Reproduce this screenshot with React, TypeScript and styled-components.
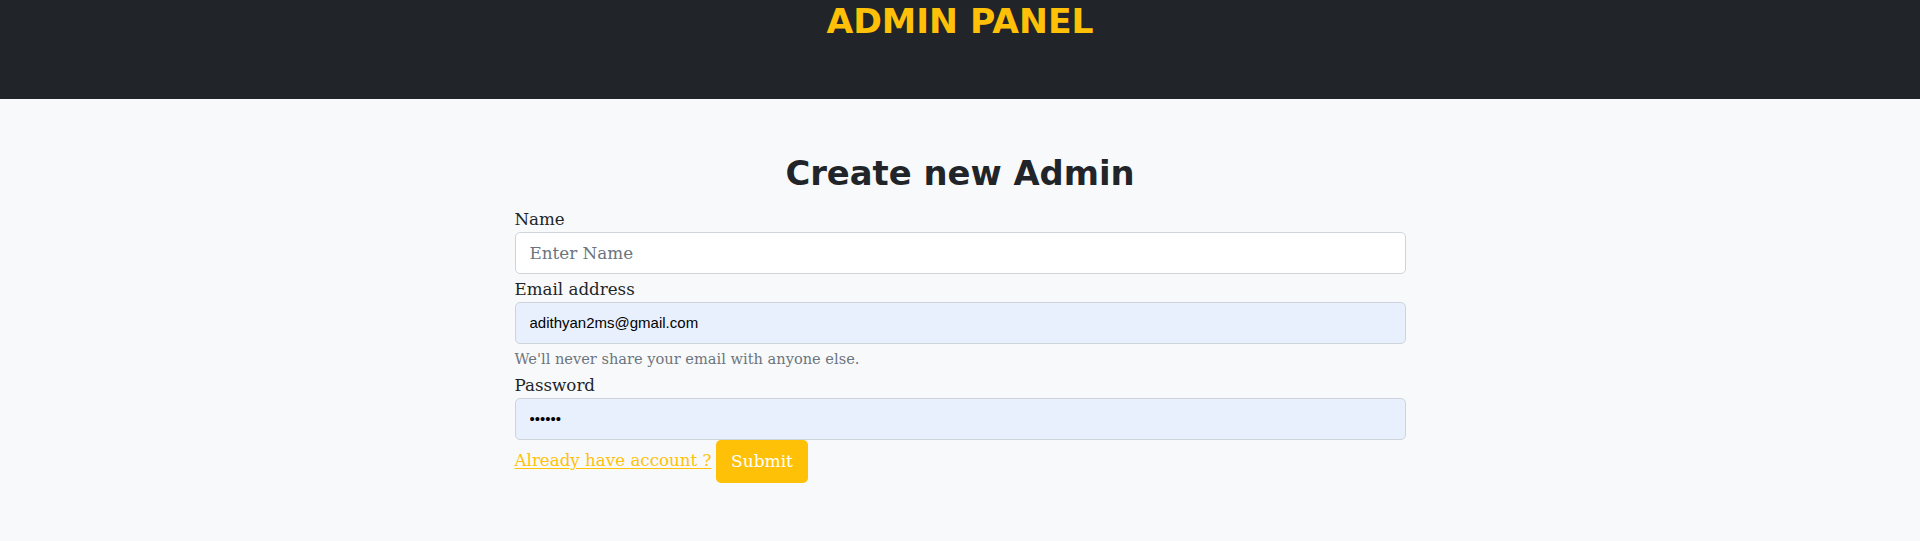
import React from "react";
import styled, { createGlobalStyle } from "styled-components";

const GlobalStyle = createGlobalStyle`
  html, body {
    margin: 0;
    padding: 0;
    background: #f8f9fa;
  }
  body {
    font-family: "DejaVu Serif", serif;
    color: #212529;
  }
  * { box-sizing: border-box; }
`;

const Page = styled.div`
  min-height: 100vh;
  background: #f8f9fa;
  display: flex;
  flex-direction: column;
`;

const TopBar = styled.header`
  height: 99px;
  background: #212529;
  display: flex;
  justify-content: center;
  align-items: flex-start;
`;

const BrandTitle = styled.h1`
  margin: 0;
  font-family: "DejaVu Sans", sans-serif;
  font-weight: 700;
  font-size: 34.6px;
  line-height: 42px;
  color: #ffc107;
`;

const Main = styled.main`
  display: flex;
  flex-direction: column;
  align-items: center;
`;

const Heading = styled.h2`
  margin: 55px 0 11px;
  font-family: "DejaVu Sans", sans-serif;
  font-weight: 700;
  font-size: 33.8px;
  line-height: 40.8px;
  color: #212529;
`;

const Form = styled.form`
  width: 891px;
  display: flex;
  flex-direction: column;
`;

const FieldLabel = styled.label<{ $first?: boolean }>`
  display: block;
  margin-top: ${(p) => (p.$first ? "0" : "2px")};
  font-size: 16.7px;
  line-height: 26px;
  color: #212529;
`;

const TextInput = styled.input<{ $autofill?: boolean }>`
  display: block;
  width: 100%;
  height: 42px;
  margin: 0;
  padding: 0 14px;
  border: 1px solid #ced4da;
  border-radius: 5px;
  background: ${(p) => (p.$autofill ? "#e8f0fe" : "#ffffff")};
  color: #000;
  font-family: ${(p) =>
    p.$autofill ? '"Liberation Sans", Arial, sans-serif' : '"DejaVu Serif", serif'};
  font-size: ${(p) => (p.$autofill ? "15px" : "16.8px")};
  outline: none;
  &::placeholder {
    color: #6c757d;
    opacity: 1;
  }
`;

const HelpText = styled.div`
  margin-top: 4px;
  font-size: 14.6px;
  line-height: 22px;
  color: #6c757d;
`;

const ActionRow = styled.div`
  display: flex;
  align-items: flex-start;
  gap: 4px;
`;

const AccountLink = styled.a`
  margin-top: 7.5px;
  color: #ffc107;
  font-size: 16.7px;
  line-height: 26px;
  text-decoration: underline;
  text-underline-offset: 2px;
`;

const SubmitButton = styled.button`
  height: 43px;
  padding: 0 15.5px;
  border: none;
  border-radius: 5px;
  background: #ffc107;
  color: #ffffff;
  font-family: "DejaVu Serif", serif;
  font-size: 17px;
  cursor: pointer;
`;

export default function App() {
  return (
    <>
      <GlobalStyle />
      <Page>
        <TopBar>
          <BrandTitle>ADMIN PANEL</BrandTitle>
        </TopBar>
        <Main>
          <Heading>Create new Admin</Heading>
          <Form onSubmit={(e) => e.preventDefault()}>
            <FieldLabel $first htmlFor="name">Name</FieldLabel>
            <TextInput id="name" type="text" placeholder="Enter Name" />
            <FieldLabel htmlFor="email">Email address</FieldLabel>
            <TextInput
              id="email"
              type="email"
              $autofill
              defaultValue="adithyan2ms@gmail.com"
            />
            <HelpText>We'll never share your email with anyone else.</HelpText>
            <FieldLabel htmlFor="password">Password</FieldLabel>
            <TextInput id="password" type="password" $autofill defaultValue="123456" />
            <ActionRow>
              <AccountLink href="#">Already have account ?</AccountLink>
              <SubmitButton type="submit">Submit</SubmitButton>
            </ActionRow>
          </Form>
        </Main>
      </Page>
    </>
  );
}
